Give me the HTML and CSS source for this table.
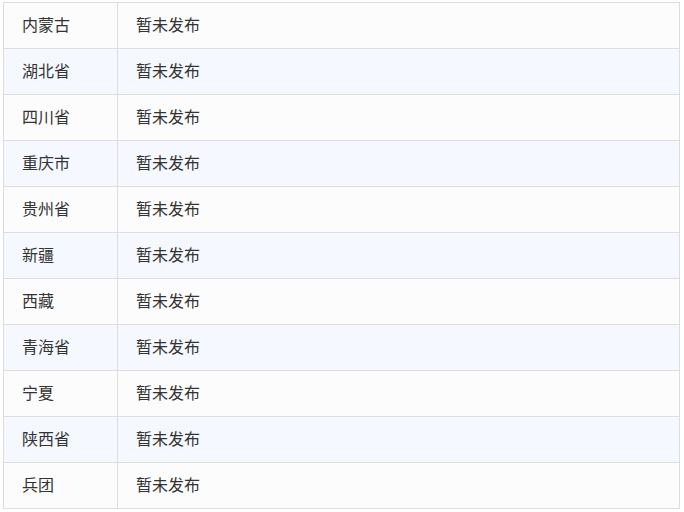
FILE: index.html
```html
<!DOCTYPE html>
<html lang="zh-CN">
<head>
<meta charset="utf-8">
<link rel="stylesheet" href="styles.css">
</head>
<body>
<table class="tbl">
<tbody>
<tr><td class="name">内蒙古</td><td class="val">暂未发布</td></tr>
<tr><td class="name">湖北省</td><td class="val">暂未发布</td></tr>
<tr><td class="name">四川省</td><td class="val">暂未发布</td></tr>
<tr><td class="name">重庆市</td><td class="val">暂未发布</td></tr>
<tr><td class="name">贵州省</td><td class="val">暂未发布</td></tr>
<tr><td class="name">新疆</td><td class="val">暂未发布</td></tr>
<tr><td class="name">西藏</td><td class="val">暂未发布</td></tr>
<tr><td class="name">青海省</td><td class="val">暂未发布</td></tr>
<tr><td class="name">宁夏</td><td class="val">暂未发布</td></tr>
<tr><td class="name">陕西省</td><td class="val">暂未发布</td></tr>
<tr><td class="name">兵团</td><td class="val">暂未发布</td></tr>
</tbody>
</table>
</body>
</html>
```
FILE: styles.css
```css
html, body {
  margin: 0;
  padding: 0;
  background: #ffffff;
}
body {
  padding: 2px 4px 0 3px;
  font-family: "Noto Sans CJK SC", "Noto Sans", sans-serif;
  font-size: 16px;
  color: #333333;
}
.tbl {
  border-collapse: collapse;
  width: 677px;
  table-layout: fixed;
}
.tbl td {
  height: 46px;
  box-sizing: border-box;
  border: 1px solid #dddddd;
  padding: 0 0 3px 18px;
  vertical-align: middle;
  line-height: 20px;
}
.tbl .name {
  width: 114px;
}
.tbl tr:nth-child(odd) td {
  background: #fcfcfc;
}
.tbl tr:nth-child(even) td {
  background: #f5f9ff;
}
```
